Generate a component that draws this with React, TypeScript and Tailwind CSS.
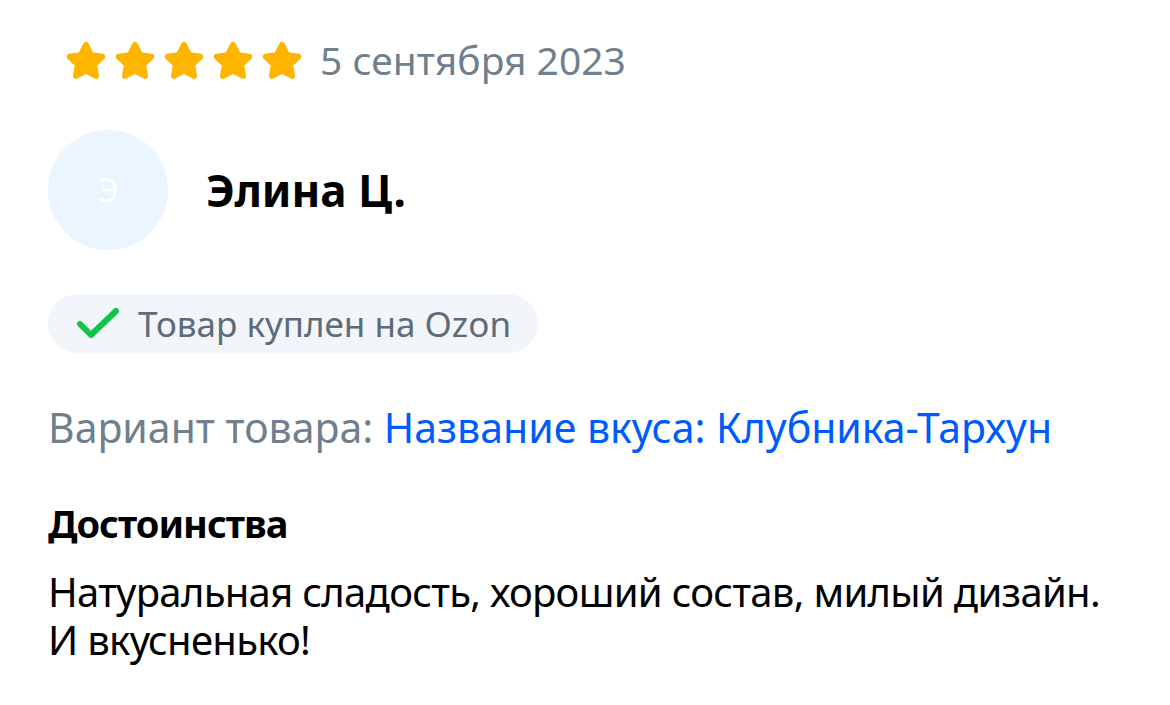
import type { ReactNode } from "react"

function Star() {
  return (
    <svg width="44" height="44" viewBox="0 0 24 24" className="shrink-0">
      <path
        d="M12 2.6c.4 0 .8.2 1 .6l2.5 5.1 5.6.8c.9.1 1.2 1.2.6 1.8l-4.1 4 1 5.6c.2.9-.8 1.6-1.6 1.2L12 19l-5 2.7c-.8.4-1.8-.3-1.6-1.2l1-5.6-4.1-4c-.6-.6-.3-1.7.6-1.8l5.6-.8L11 3.2c.2-.4.6-.6 1-.6z"
        fill="#ffb400"
        stroke="#ffb400"
        strokeWidth="1"
        strokeLinejoin="round"
      />
    </svg>
  )
}

function Check() {
  return (
    <svg width="44" height="34" viewBox="0 0 44 34" className="shrink-0">
      <path
        d="M4 17l11 11L40 4"
        fill="none"
        stroke="#10c44c"
        strokeWidth="6"
        strokeLinecap="round"
        strokeLinejoin="round"
      />
    </svg>
  )
}

function Section({ title, children }: { title: string; children: ReactNode }) {
  return (
    <div className="flex flex-col gap-[23px]">
      <div className="text-[38px] leading-[44px] font-bold tracking-[-1px] text-black">{title}</div>
      <div className="text-[40px] leading-[48px] tracking-[-0.7px] text-black">{children}</div>
    </div>
  )
}

export default function App() {
  return (
    <div
      className="w-[1170px] h-[705px] bg-white pl-[48px] pt-[36px] flex flex-col"
      style={{ fontFamily: '"Noto Sans", "Open Sans", sans-serif' }}
    >
      {/* Rating + date */}
      <div className="flex items-center pl-[16px] h-[48px]">
        <div className="flex items-center gap-[5px]">
          <Star />
          <Star />
          <Star />
          <Star />
          <Star />
        </div>
        <span className="ml-[16px] text-[39px] leading-[44px] text-[#707f8d]">5 сентября 2023</span>
      </div>

      {/* Author */}
      <div className="flex items-center gap-[38px] mt-[46px]">
        <div className="w-[120px] h-[120px] rounded-full bg-[#eaf5ff] flex items-center justify-center">
          <span className="text-[32px] text-white">Э</span>
        </div>
        <span className="text-[44px] leading-[48px] font-bold text-black">Элина Ц.</span>
      </div>

      {/* Purchase badge */}
      <div className="mt-[44px] self-start h-[59px] rounded-full bg-[#f2f5f9] flex items-center pl-[28px] pr-[27px] gap-[18px]">
        <Check />
        <span className="text-[35px] leading-[40px] text-[#5d6b7a]">Товар куплен на Ozon</span>
      </div>

      {/* Variant */}
      <div className="mt-[50px] text-[41px] leading-[48px] text-[#707f8d]">
        Вариант товара: <span className="text-[#005bff]">Название вкуса: Клубника-Тархун</span>
      </div>

      <div className="mt-[50px]">
        <Section title="Достоинства">
          <div>Натуральная сладость, хороший состав, милый дизайн.</div>
          <div>И вкусненько!</div>
        </Section>
      </div>
    </div>
  )
}
